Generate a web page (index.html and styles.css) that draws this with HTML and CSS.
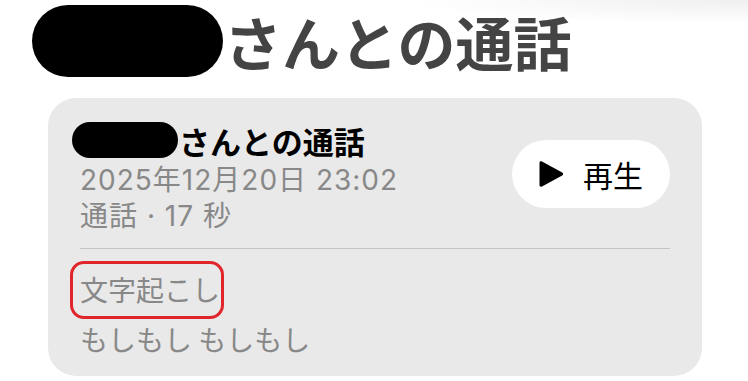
FILE: index.html
```html
<!DOCTYPE html>
<html lang="ja">
<head>
<meta charset="utf-8">
<title>通話</title>
<link rel="stylesheet" href="styles.css">
</head>
<body>
<div class="page">
  <h1 class="heading"><span class="redact redact-lg"></span><span>さんとの通話</span></h1>
  <section class="card">
    <div class="card-top">
      <div class="info">
        <div class="title"><span class="redact redact-sm"></span><span>さんとの通話</span></div>
        <div class="date">2025年12月20日 23:02</div>
        <div class="meta">通話 · 17 秒</div>
      </div>
      <button class="play" type="button">
        <svg class="play-icon" width="25" height="28" viewBox="0 0 25 28" aria-hidden="true">
          <path d="M3 1.6 C1.6 0.8 0.5 1.5 0.5 3 V25 C0.5 26.5 1.6 27.2 3 26.4 L23.2 15.5 C24.5 14.8 24.5 13.2 23.2 12.5 Z" fill="#000"/>
        </svg>
        <span>再生</span>
      </button>
    </div>
    <div class="divider"></div>
    <div class="label-row"><span class="label">文字起こし</span></div>
    <div class="transcript">もしもし もしもし</div>
  </section>
</div>
</body>
</html>
```

FILE: styles.css
```css
html, body {
  margin: 0;
  padding: 0;
}
body {
  width: 748px;
  height: 381px;
  overflow: hidden;
  background: radial-gradient(340px 24px at 100% 0, #efefef, #ffffff);
  font-family: "Inter", "Noto Sans CJK JP", sans-serif;
}
.page {
  padding-top: 5px;
}
.heading {
  margin: 0 0 0 32px;
  display: flex;
  align-items: center;
  gap: 1px;
  height: 72px;
  font-family: "Noto Sans CJK JP", sans-serif;
  font-size: 58px;
  font-weight: 700;
  color: #444444;
  line-height: 72px;
}
.redact {
  display: inline-block;
  background: #000;
  flex: none;
}
.redact-lg {
  width: 191px;
  height: 72px;
  border-radius: 36px;
}
.redact-sm {
  width: 106px;
  height: 36px;
  border-radius: 18px;
  margin-left: -8px;
}
.card {
  margin: 21px 0 0 48px;
  width: 654px;
  box-sizing: border-box;
  padding: 22px 32px 19px;
  background: #e9e9e9;
  border-radius: 28px;
}
.card-top {
  display: flex;
  justify-content: space-between;
  align-items: flex-start;
}
.title {
  display: flex;
  align-items: center;
  gap: 1px;
  height: 40px;
  font-family: "Noto Sans CJK JP", sans-serif;
  font-size: 31px;
  font-weight: 700;
  color: #000;
}
.date, .meta {
  font-size: 28px;
  line-height: 36px;
  letter-spacing: 1px;
  color: #888888;
}
.date {
  margin-top: 2px;
}
.play {
  margin-top: 20px;
  display: flex;
  align-items: center;
  gap: 19px;
  width: 158px;
  height: 68px;
  box-sizing: border-box;
  padding: 0 0 0 27px;
  border: none;
  border-radius: 34px;
  background: #ffffff;
  font-family: "Noto Sans CJK JP", sans-serif;
  font-size: 30px;
  color: #000;
}
.play-icon {
  display: block;
  flex: none;
}
.divider {
  margin-top: 14px;
  height: 1px;
  background: #c4c4c4;
}
.label-row {
  margin-top: 22px;
  display: flex;
}
.label {
  position: relative;
  font-family: "Noto Sans CJK JP", sans-serif;
  font-size: 28px;
  line-height: 36px;
  color: #888888;
}
.label::after {
  content: "";
  position: absolute;
  left: -10px;
  right: -4px;
  top: -10px;
  bottom: -12px;
  border: 3px solid #e0252b;
  border-radius: 14px;
}
.transcript {
  margin-top: 14px;
  font-family: "Noto Sans CJK JP", sans-serif;
  font-size: 28px;
  line-height: 36px;
  color: #888888;
}
```
